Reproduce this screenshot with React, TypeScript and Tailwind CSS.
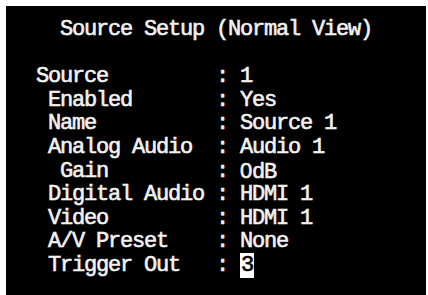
import type { ReactNode } from 'react';

// the OSD font has a plain zero, Liberation Mono's is dotted
const zero = <span className="font-['Liberation_Sans',sans-serif] leading-none tracking-[-0.2px]">0</span>;

const rows: { label: string; indent: number; value: ReactNode; selected?: boolean }[] = [
  { label: 'Source', indent: 0, value: '1' },
  { label: 'Enabled', indent: 1, value: 'Yes' },
  { label: 'Name', indent: 1, value: 'Source 1' },
  { label: 'Analog Audio', indent: 1, value: 'Audio 1' },
  { label: 'Gain', indent: 2, value: <>{zero}dB</> },
  { label: 'Digital Audio', indent: 1, value: 'HDMI 1' },
  { label: 'Video', indent: 1, value: 'HDMI 1' },
  { label: 'A/V Preset', indent: 1, value: 'None' },
  { label: 'Trigger Out', indent: 1, value: '3', selected: true },
];

const indents = ['pl-0', 'pl-[12px]', 'pl-[24px]'];

export default function App() {
  return (
    <div className="h-[295px] w-[428px] bg-white pl-[6px] pt-[6px]">
      <div className="h-[289px] w-[420px] bg-black pl-[30px] pt-[12px] font-['Liberation_Mono',monospace] text-[22px] font-normal leading-[23.6px] tracking-[-1.2px] text-[#f2f2f2] [-webkit-text-stroke:0.6px_#f2f2f2]">
        <div className="pl-[24px] whitespace-pre">Source Setup (Normal View)</div>
        <div className="mt-[23.6px]">
          {rows.map((r) => (
            <div key={r.label} className="grid h-[23.6px] grid-cols-[180px_24px_auto] whitespace-pre">
              <span className={indents[r.indent]}>{r.label}</span>
              <span>:</span>
              <span>
                {r.selected ? (
                  <span className="bg-white px-[1px] text-black [-webkit-text-stroke:0.6px_#000]">{r.value}</span>
                ) : (
                  r.value
                )}
              </span>
            </div>
          ))}
        </div>
      </div>
    </div>
  );
}
